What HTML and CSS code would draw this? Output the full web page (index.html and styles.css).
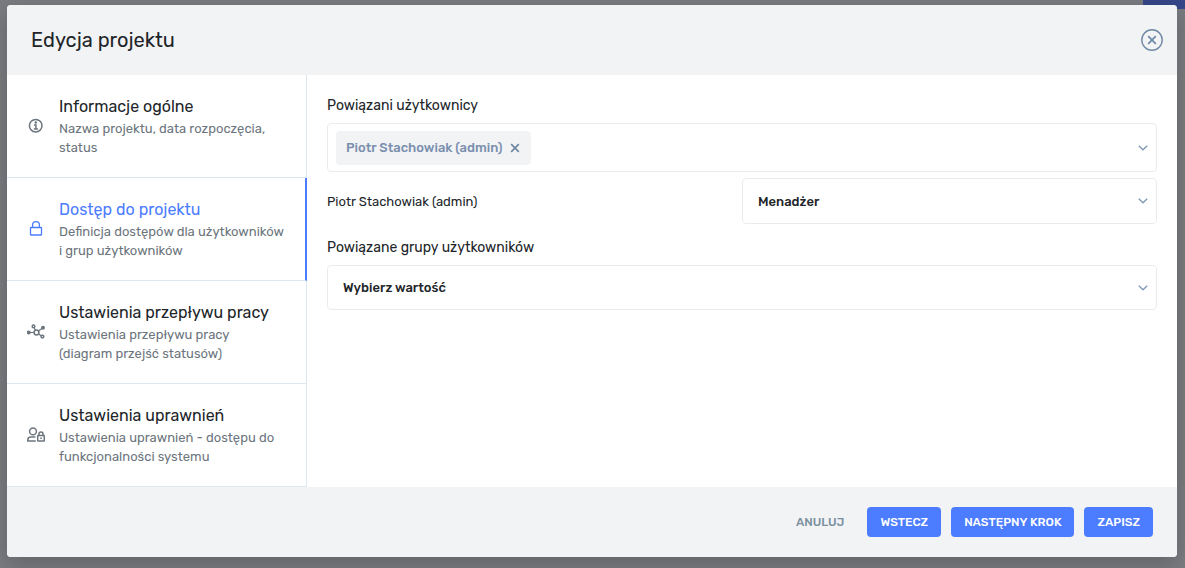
FILE: index.html
```html
<!DOCTYPE html>
<html lang="pl">
<head>
<meta charset="utf-8">
<meta name="viewport" content="width=device-width, initial-scale=1">
<title>Edycja projektu</title>
<link rel="stylesheet" href="styles.css">
</head>
<body>
<div class="page-accent"></div>
<main class="modal" role="dialog" aria-labelledby="modal-title">
  <header class="modal-header">
    <h1 class="modal-title" id="modal-title">Edycja projektu</h1>
    <button class="close" type="button" aria-label="Zamknij">
      <svg width="22" height="22" viewBox="0 0 22 22" fill="none" stroke="currentColor"><circle cx="11" cy="11" r="10.2" stroke-width="1.4"/><path d="M7.2 7.2l7.6 7.6M14.8 7.2l-7.6 7.6" stroke-width="1.7"/></svg>
    </button>
  </header>
  <div class="modal-body">
    <nav class="steps">
      <a class="step" href="#info">
        <svg class="step-icon" viewBox="0 0 18 18" fill="none" stroke="currentColor"><circle cx="8.7" cy="8.7" r="6.3" stroke-width="1.5"/><path d="M7 8h1.9v3.6M6.8 11.9h4.2" stroke-width="1.5"/><circle cx="8.8" cy="5.5" r="1.2" fill="currentColor" stroke="none"/></svg>
        <span class="step-text"><span class="step-title">Informacje ogólne</span><span class="step-desc">Nazwa projektu, data rozpoczęcia, status</span></span>
      </a>
      <a class="step active" href="#access" aria-current="step">
        <svg class="step-icon" viewBox="0 0 18 18" fill="none" stroke="currentColor" stroke-width="1.3"><rect x="3.5" y="7.5" width="11" height="7.5" rx=".6"/><path d="M5.6 7.5V5a3.4 3.4 0 0 1 6.8 0v2.5"/></svg>
        <span class="step-text"><span class="step-title">Dostęp do projektu</span><span class="step-desc">Definicja dostępów dla użytkowników i&nbsp;grup użytkowników</span></span>
      </a>
      <a class="step" href="#workflow">
        <svg class="step-icon" viewBox="0 0 18 18" fill="none" stroke="currentColor" stroke-width="1.5"><circle cx="9.5" cy="9.5" r="2.4"/><circle cx="6.5" cy="3.4" r="1.3"/><circle cx="15.4" cy="13.6" r="1.4"/><circle cx="1.8" cy="9.5" r="1.2" fill="currentColor"/><circle cx="16" cy="4.7" r="1.2" fill="currentColor"/><path d="M3 9.5h4M7.1 4.6l1.4 2.8M11.4 8l3.5-2.6M11.6 10.9l2.5 1.8" stroke-width="1.2"/></svg>
        <span class="step-text"><span class="step-title">Ustawienia przepływu pracy</span><span class="step-desc">Ustawienia przepływu pracy (diagram&nbsp;przejść statusów)</span></span>
      </a>
      <a class="step" href="#permissions">
        <svg class="step-icon" viewBox="0 0 18 18" fill="none" stroke="currentColor" stroke-width="1.5"><circle cx="6" cy="5.4" r="3.4"/><path d="M8.8 15H.8v-1.1c0-1.7 1.3-2.8 3-2.8h4.6"/><rect x="10.7" y="9.6" width="6.6" height="5.4" rx=".5"/><path d="M12 9.6V7.9a2 2 0 0 1 4 0v1.7M14 11.5v1.6"/></svg>
        <span class="step-text"><span class="step-title">Ustawienia uprawnień</span><span class="step-desc">Ustawienia uprawnień - dostępu do funkcjonalności systemu</span></span>
      </a>
    </nav>
    <form class="form" id="access">
      <div class="field">
        <span class="label" id="users-label">Powiązani użytkownicy</span>
        <div class="multi" role="group" aria-labelledby="users-label">
          <span class="chip">Piotr Stachowiak (admin)
            <button class="chip-remove" type="button" aria-label="Usuń"><svg width="10" height="10" viewBox="0 0 10 10" fill="none" stroke="currentColor" stroke-width="1.7"><path d="M1.2 1.2l7.6 7.6M8.8 1.2L1.2 8.8"/></svg></button>
          </span>
          <button class="multi-toggle" type="button" aria-label="Rozwiń listę"><svg class="chevron" viewBox="0 0 10 6"><path d="M.8.8L5 4.8 9.2.8"/></svg></button>
        </div>
      </div>
      <div class="role-row">
        <label class="role-name" for="role">Piotr Stachowiak (admin)</label>
        <div class="select-box">
          <select id="role" class="select"><option>Menadżer</option></select>
          <svg class="chevron" viewBox="0 0 10 6"><path d="M.8.8L5 4.8 9.2.8"/></svg>
        </div>
      </div>
      <div class="field">
        <label class="label" for="groups">Powiązane grupy użytkowników</label>
        <div class="select-box">
          <select id="groups" class="select"><option>Wybierz wartość</option></select>
          <svg class="chevron" viewBox="0 0 10 6"><path d="M.8.8L5 4.8 9.2.8"/></svg>
        </div>
      </div>
    </form>
  </div>
  <footer class="modal-footer">
    <button class="btn btn-text" type="button">ANULUJ</button>
    <button class="btn" type="button">WSTECZ</button>
    <button class="btn" type="button">NASTĘPNY KROK</button>
    <button class="btn" type="button">ZAPISZ</button>
  </footer>
</main>
</body>
</html>
```
FILE: styles.css
```css
* { box-sizing: border-box; }

body {
  margin: 0;
  min-height: 100vh;
  padding: 5px 8px 11px 7px;
  display: flex;
  background: #7b7c81;
  color: #212529;
  font-family: Rubik, Roboto, "Liberation Sans", sans-serif;
  font-size: 13px;
}

button, select { font: inherit; color: inherit; }
button { border: 0; padding: 0; background: none; cursor: pointer; }

.page-accent {
  position: absolute;
  top: 0;
  right: 0;
  width: 42px;
  height: 9px;
  background: #35478a;
}

.modal {
  position: relative;
  flex: 1;
  min-width: 0;
  display: flex;
  flex-direction: column;
  border-radius: 4px;
  background: #fff;
  overflow: hidden;
  box-shadow: 0 7px 24px rgba(0, 0, 0, .22);
}

.modal-header {
  display: flex;
  align-items: center;
  justify-content: space-between;
  padding: 20px 14px 20px 24px;
  background: #f2f3f5;
}

.modal-title { margin: 0; font-size: 20px; font-weight: 400; line-height: 30px; }

.close { display: flex; color: #7089a5; }

.modal-body { flex: 1; display: flex; }

.steps { width: 300px; flex: none; border-right: 1px solid #dde7ef; }

.step {
  display: flex;
  align-items: center;
  gap: 14px;
  padding: 20px;
  border-bottom: 1px solid #dde7ef;
  color: #6c757d;
  text-decoration: none;
}

.step-icon { width: 18px; height: 18px; flex: none; }
.step-text { flex: 1; min-width: 0; }
.step-title { display: block; font-size: 16px; line-height: 24px; color: #212529; }
.step-desc { display: block; line-height: 19px; }

.step.active {
  margin-right: -1px;
  padding-right: 19px;
  border-right: 2px solid #4c7cff;
}
.step.active .step-icon, .step.active .step-title { color: #4c7cff; }

.form { flex: 1; min-width: 0; padding: 20px; }

.label {
  display: block;
  margin-bottom: 6px;
  font-size: 14px;
  line-height: 22px;
}

.multi {
  display: flex;
  align-items: center;
  justify-content: space-between;
  padding: 7px 8px 6px;
  border: 1px solid #e9ecee;
  border-radius: 4px;
}

.chip {
  display: flex;
  align-items: center;
  gap: 7px;
  padding: 0 11px 0 10px;
  border-radius: 4px;
  background: #f2f3f5;
  color: #7a8fae;
  font-size: 13px;
  font-weight: 500;
  line-height: 34px;
}

.chip-remove, .multi-toggle { display: flex; color: #6f87a1; }

.chevron {
  width: 10px;
  height: 6px;
  fill: none;
  stroke: #7f98b5;
  stroke-width: 1.3;
}

.role-row {
  display: grid;
  grid-template-columns: 1fr 1fr;
  align-items: center;
  margin: 6px 0 13px;
}

.select-box { display: grid; align-items: center; }

.select-box > * { grid-area: 1 / 1; }

.select-box .chevron { justify-self: end; margin-right: 9px; pointer-events: none; }

.select {
  appearance: none;
  width: 100%;
  height: 45px;
  padding: 0 28px 0 15px;
  border: 1px solid #e9ecee;
  border-radius: 4px;
  background: #fff;
  font-weight: 500;
}

.role-row .select { height: 46px; }

.modal-footer {
  display: flex;
  justify-content: flex-end;
  gap: 10px;
  padding: 20px 24px;
  background: #f2f3f5;
}

.btn {
  height: 30px;
  padding: 0 13px;
  border-radius: 4px;
  background: #4c7cff;
  color: #fff;
  font-size: 12px;
  font-weight: 500;
}

.btn-text { background: none; color: #7b909f; }
```
